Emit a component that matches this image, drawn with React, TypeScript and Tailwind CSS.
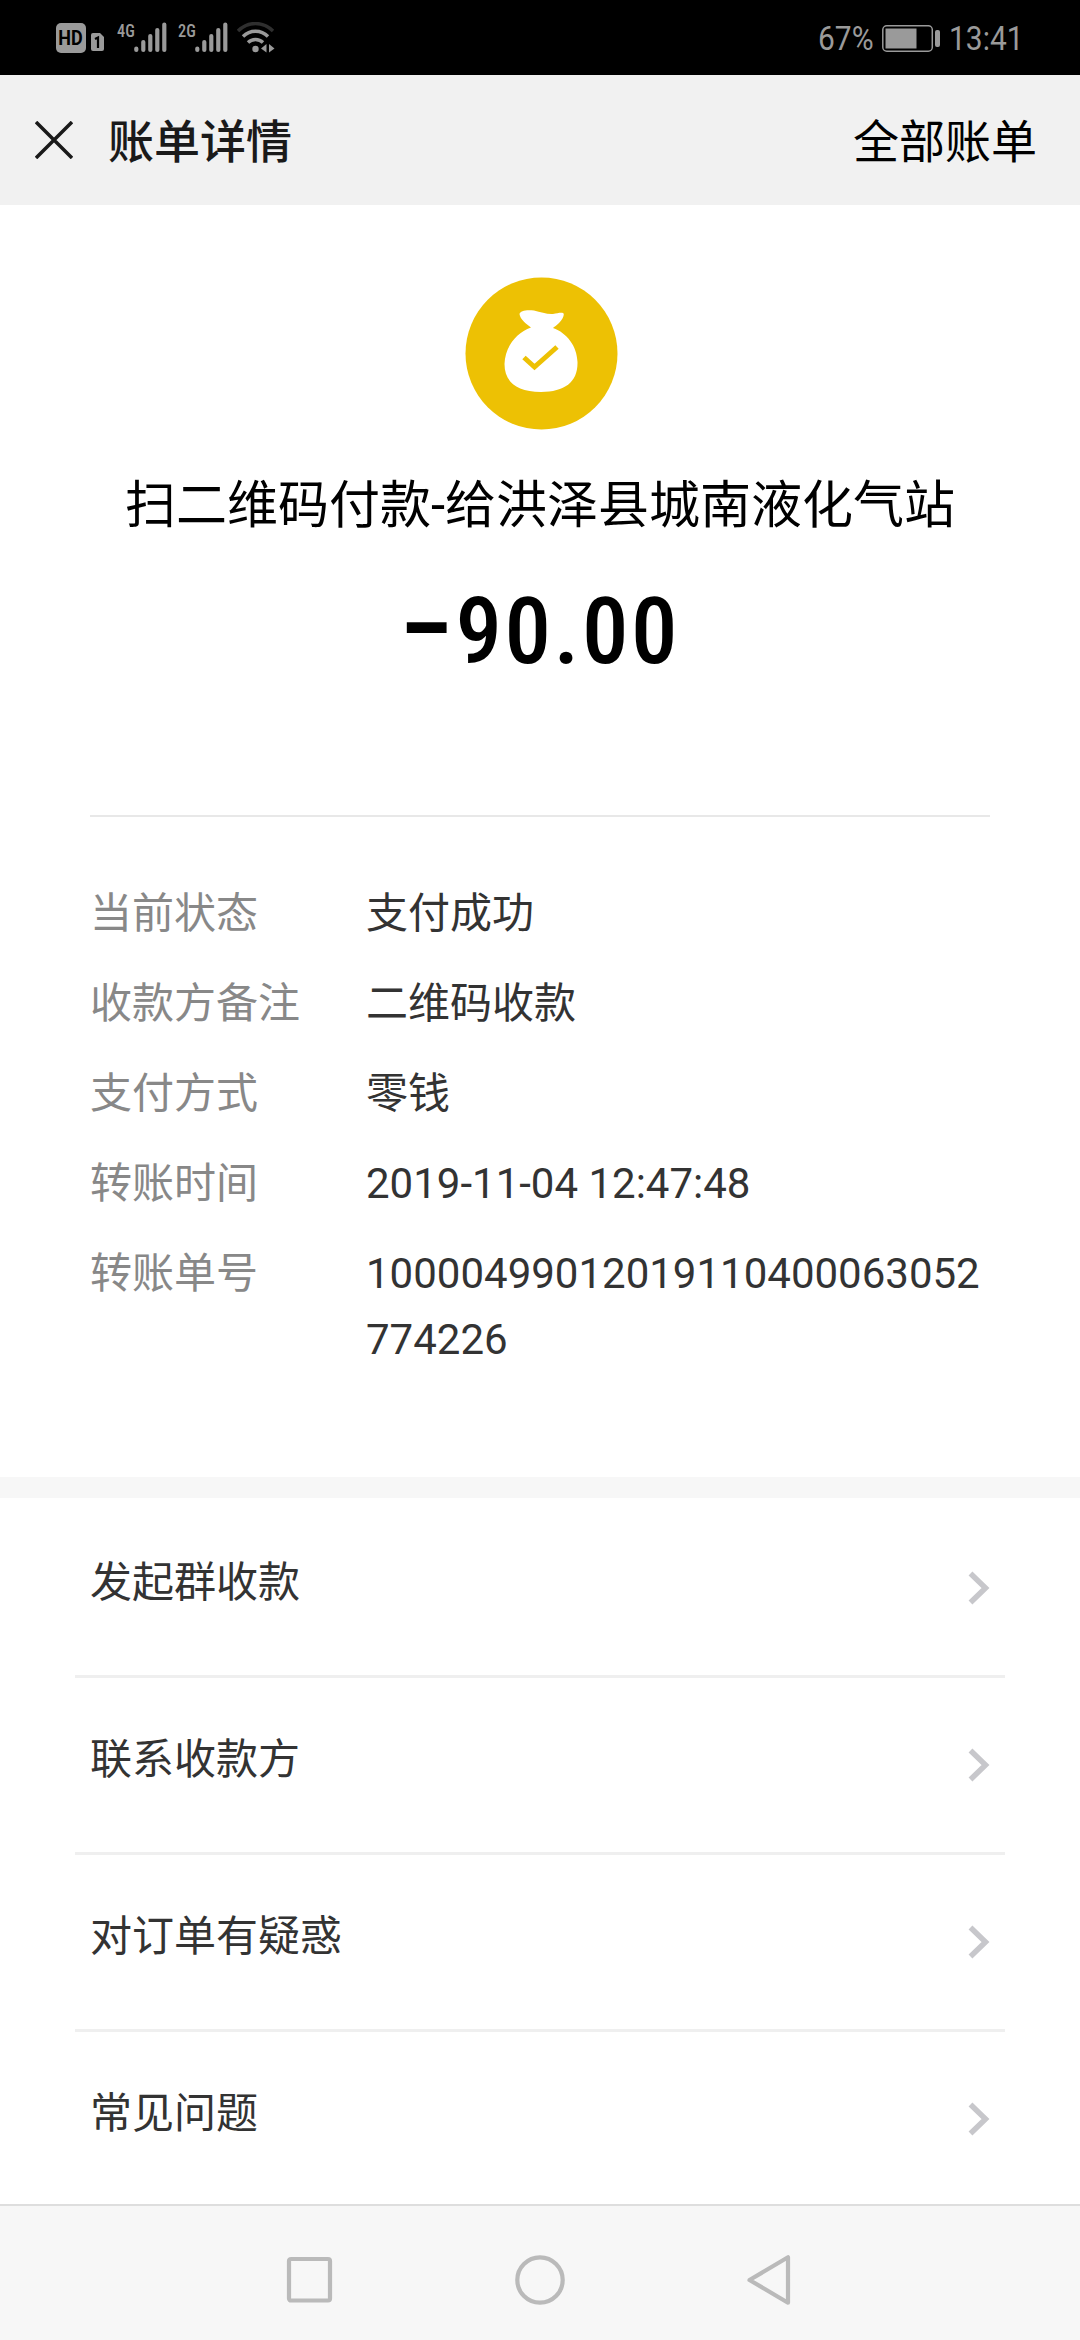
import React from "react";

const details = [
  { label: "当前状态", value: "支付成功" },
  { label: "收款方备注", value: "二维码收款" },
  { label: "支付方式", value: "零钱" },
  { label: "转账时间", value: "2019-11-04 12:47:48" },
  { label: "转账单号", value: "10000499012019110400063052774226" },
];

const actions = ["发起群收款", "联系收款方", "对订单有疑惑", "常见问题"];

function Signal({ label }: { label: string }) {
  return (
    <div className="flex">
      <span className="w-[17px] text-[19px] leading-[19px] font-medium font-stretch-condensed origin-left scale-x-[0.86] -mt-px">
        {label}
      </span>
      <svg width="33" height="31" viewBox="0 0 33 31" stroke="#9a9a9a" strokeWidth="4.2" strokeLinecap="round">
        <path d="M2.3 26.5v1.5M9.3 20v8M16.3 14v14M23.3 8v20M30.3 2.5V28" />
      </svg>
    </div>
  );
}

function StatusBar() {
  return (
    <div className="flex h-[75px] shrink-0 justify-between bg-black pl-14 pr-[57px] text-[#9a9a9a]">
      <div className="flex pt-[22px]">
        <div className="mt-px flex size-[30px] items-center justify-center rounded-[5px] bg-[#9a9a9a] text-[20px] font-bold text-black">
          <span className="scale-x-[0.9]">HD</span>
        </div>
        <svg className="ml-[5px] mt-[11px]" width="13" height="18" viewBox="0 0 13 18">
          <path d="M2 0h7l4 4v12a2 2 0 0 1-2 2H2a2 2 0 0 1-2-2V2a2 2 0 0 1 2-2z" fill="#9a9a9a" />
          <path d="M4 6l3-1.5V15" fill="none" stroke="#000" strokeWidth="2.2" />
        </svg>
        <div className="ml-[13px] flex gap-[11px]">
          <Signal label="4G" />
          <Signal label="2G" />
        </div>
        <svg className="ml-[9px]" width="40" height="32" viewBox="0 0 40 32" fill="none" strokeWidth="3.4">
          <path d="M1 9C11-1 26-1 36 9" stroke="#2f2f2f" />
          <path d="M6 14.5c7-7 18-7 25 0M11 20.5c4-4 11-4 15 0" stroke="#9a9a9a" />
          <circle cx="18.5" cy="27" r="3.2" fill="#9a9a9a" />
          <path d="M29.5 22v8.5l-5.5-4zM32 22v8.5l5.500-4z" fill="#9a9a9a" />
        </svg>
      </div>
      <div className="flex items-center pt-px text-[34px]">
        <span className="w-[64px] origin-left scale-x-[0.88]">67%</span>
        <svg width="59" height="27" viewBox="0 0 59 27" fill="#9a9a9a">
          <rect x="0.8" y="0.8" width="49.5" height="25.4" rx="4" fill="none" stroke="#9a9a9a" strokeWidth="1.5" />
          <rect x="3.5" y="3.5" width="31" height="20" />
          <rect x="53" y="5" width="5" height="17" rx="2" />
        </svg>
        <span className="ml-[8px] w-[74px] origin-left scale-x-[0.88]">13:41</span>
      </div>
    </div>
  );
}

function MoneyBag() {
  return (
    <svg className="ml-[3px]" width="153" height="153" viewBox="0 0 153 153">
      <circle cx="76.5" cy="76.5" r="76" fill="#edc104" />
      <path
        d="M66 50.5C61 47 55 42 54.5 37C55 33.5 62 32.5 69 33.5C76 35 82 37.5 88 37C92 36.5 95 35.5 98 36C100 37 98 42 94 46C92 48 89 50 88 51C102 56 112 69 112.5 85C113 105 100 115 76 115C52 115 39.5 105 39.5 87C40 70 51 56 66 50.5z"
        fill="#fff"
      />
      <path d="M59 80.5l10.5 9.5L92 70" fill="none" stroke="#edc104" strokeWidth="5" />
    </svg>
  );
}

export default function App() {
  return (
    <div className="flex h-[2340px] w-[1080px] flex-col overflow-hidden bg-white font-['Roboto','Noto_Sans_CJK_SC',sans-serif]">
      <StatusBar />

      {/* Header */}
      <header className="flex h-[130px] shrink-0 items-center justify-between bg-[#f1f1f1] pl-[35px] pr-[43px] text-[46px]">
        <div className="flex items-center">
          <svg width="38" height="38" viewBox="0 0 38 38" stroke="#1a1a1a" strokeWidth="3.5">
            <path d="M1 1l36 36M37 1L1 37" />
          </svg>
          <h1 className="ml-[35px] pt-[5px] font-medium text-[#1a1a1a]">账单详情</h1>
        </div>
        <span className="pt-[5px] text-black">全部账单</span>
      </header>

      {/* Summary */}
      <section className="flex shrink-0 flex-col items-center pt-[72px]">
        <MoneyBag />
        <p className="mt-[38px] h-[76px] text-[51px] leading-[76px] text-black">扫二维码付款-给洪泽县城南液化气站</p>
        <p className="mt-[33px] flex h-[110px] items-center text-[93px] leading-[110px] tracking-[2.5px] text-black font-stretch-condensed">
          <span className="-mt-1.5 mr-0.5 font-bold">–</span>
          <span className="font-medium">90.00</span>
        </p>
      </section>

      <div className="mx-[90px] mt-[128px] h-0.5 shrink-0 bg-[#e8e8e8]" />

      {/* Details */}
      <dl className="mt-[64px] flex shrink-0 flex-col gap-6 px-[90px] text-[42px] leading-[66px]">
        {details.map((d) => (
          <div key={d.label} className="flex">
            <dt className="w-[276px] shrink-0 text-[#888]">{d.label}</dt>
            <dd className="min-w-0 flex-1 break-all text-[#333]">{d.value}</dd>
          </div>
        ))}
      </dl>

      <div className="mt-[104px] h-[21px] shrink-0 bg-[#f7f7f7]" />

      {/* Actions */}
      <ul className="min-h-0 flex-1 px-[75px] pt-[3px]">
        {actions.map((a) => (
          <li
            key={a}
            className="flex h-[177px] justify-between border-b-3 border-[#efefef] px-[15px] pt-[50px] text-[42px] leading-[63px] text-[#333] last:h-[150px] last:border-0"
          >
            {a}
            <svg className="mt-[20px]" width="22" height="34" viewBox="0 0 22 34" fill="none" stroke="#c7c7cb" strokeWidth="5.5">
              <path d="M2.5 2.5L17.5 17L2.5 31.5" />
            </svg>
          </li>
        ))}
      </ul>

      {/* System navigation */}
      <nav className="flex h-[136px] shrink-0 justify-center gap-[181px] border-t-2 border-[#dedede] bg-[#f7f7f7] pt-[49px]">
        <svg width="50" height="52" viewBox="0 0 50 52" fill="none" stroke="#bababa" strokeWidth="4.2">
          <rect x="5" y="4" width="41" height="41.5" rx="2" />
        </svg>
        <svg width="50" height="52" viewBox="0 0 50 52" fill="none" stroke="#bababa" strokeWidth="4.2">
          <circle cx="25" cy="25" r="22.7" />
        </svg>
        <svg width="50" height="52" viewBox="0 0 50 52" fill="none" stroke="#bababa" strokeWidth="4.2" strokeLinejoin="round">
          <path d="M3.5 25L42 2.3V47.7z" />
        </svg>
      </nav>
    </div>
  );
}
